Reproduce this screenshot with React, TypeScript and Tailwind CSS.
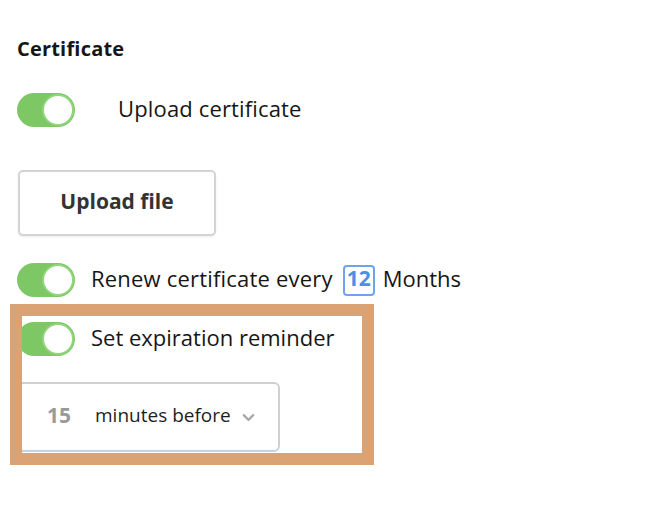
import React from 'react';
import { ChevronDown } from 'lucide-react';

const Toggle: React.FC = () => (
  <div className="relative w-[58px] h-[34px] shrink-0 rounded-full bg-[#7dc765]">
    <div className="absolute right-px top-px w-[32px] h-[32px] rounded-full bg-white border-2 border-[#92d57c]" />
  </div>
);

const App: React.FC = () => {
  return (
    <div className="w-[660px] h-[514px] bg-white text-[#161616]" style={{ fontFamily: '"Open Sans", "Liberation Sans", sans-serif' }}>
      <div className="pl-[17px] pt-[37px]">
        <h2 className="text-[20px] leading-[24px] font-bold tracking-[0.2px]">Certificate</h2>

        <div className="mt-[32px] h-[34px] flex items-center">
          <Toggle />
          <span className="ml-[43px] pb-[4px] text-[22px] tracking-[0.15px]">Upload certificate</span>
        </div>

        <button className="mt-[43px] ml-px w-[198px] h-[66px] pb-[2px] rounded-[5px] border-2 border-[#d4d4d4] bg-white text-[21px] font-bold text-[#333] shadow-[0_1px_2px_rgba(0,0,0,0.08)]">
          Upload file
        </button>

        <div className="mt-[27px] h-[34px] flex items-center">
          <Toggle />
          <span className="ml-[16px] pb-[4px] text-[22px] tracking-[0.2px]">Renew certificate every</span>
          <span className="ml-[10px] w-[32px] h-[31px] pb-[2px] flex items-center justify-center rounded-[4px] border-2 border-[#6ea4ef] text-[21px] font-bold text-[#4a8fe8]">
            12
          </span>
          <span className="ml-[8px] pb-[4px] text-[22px]">Months</span>
        </div>
      </div>

      <div className="mt-[7px] ml-[10px] w-[364px] h-[161px] border-[12px] border-[#dba274] overflow-hidden">
        <div className="-ml-[5px] pt-[6px]">
          <div className="h-[34px] flex items-center">
            <Toggle />
            <span className="ml-[16px] pb-[4px] text-[22px]">Set expiration reminder</span>
          </div>
          <div className="mt-[26px] w-[263px] h-[70px] pb-[3px] flex items-center pl-[28px] rounded-[6px] border-2 border-[#d0d0d0]">
            <span className="text-[21px] font-bold text-[#9a9a9a]">15</span>
            <span className="ml-[24px] text-[19px] text-[#1e1e1e]">minutes before</span>
            <ChevronDown className="ml-[8px] mt-[3px] w-[19px] h-[19px] text-[#a8a8a8]" strokeWidth={2.75} />
          </div>
        </div>
      </div>
    </div>
  );
};

export default App;
